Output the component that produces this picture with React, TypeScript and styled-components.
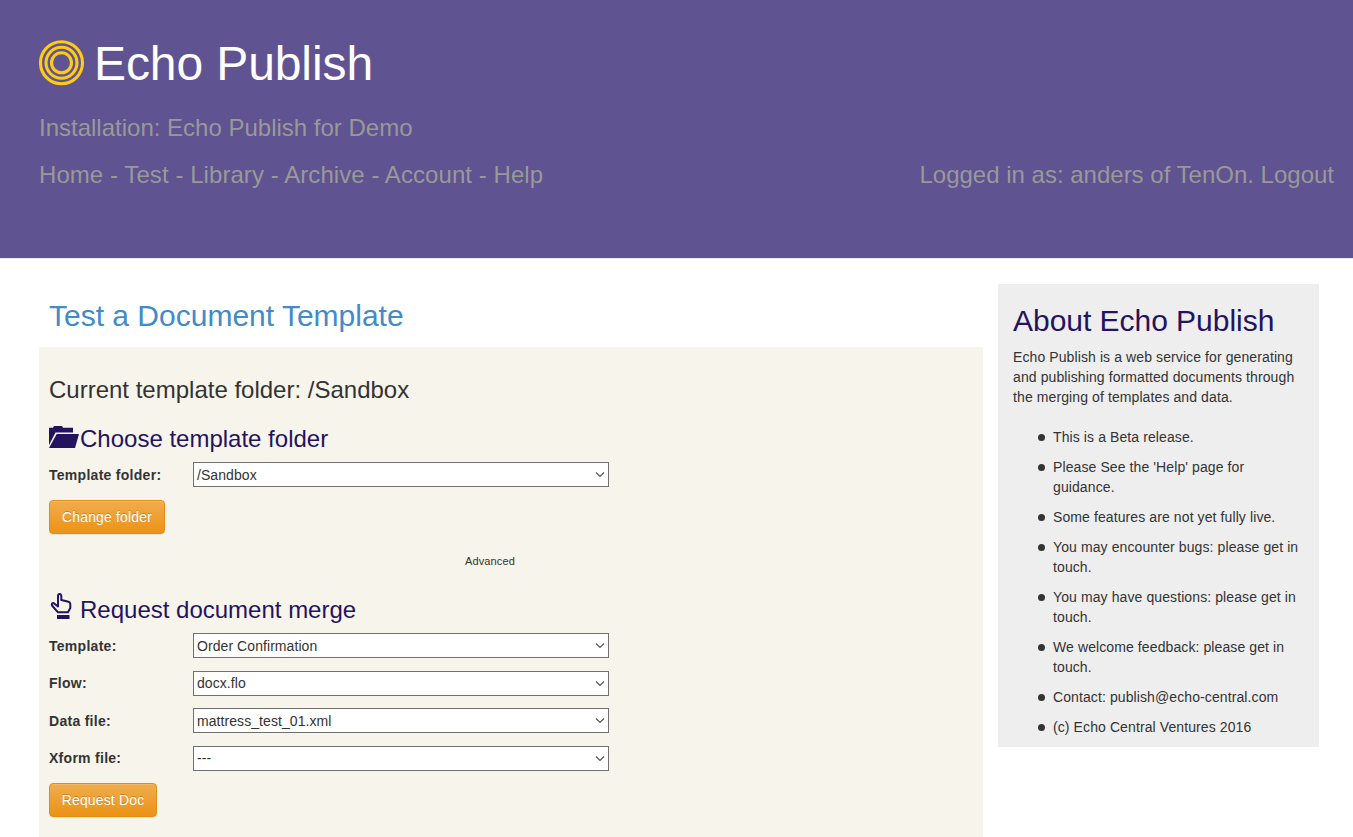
import React from 'react';
import styled, { createGlobalStyle } from 'styled-components';

const Global = createGlobalStyle`
  * { box-sizing: border-box; }
  body {
    margin: 0; background: #fff; color: #333; overflow: hidden;
    font: 14px/20px "Liberation Sans", Arial, sans-serif;
  }
  h1, h2, h3, h4, p, ul { margin: 0; font-weight: 400; }
`;

const Page = styled.div`height: 837px; overflow: hidden;`;
const Header = styled.header`
  height: 259px; padding: 36px 19px 0 39px; background: #5f5391;
  border-bottom: 1px solid #eeeeee; color: #999;
`;
const Brand = styled.h1`
  display: flex; align-items: center; gap: 9px; height: 53px;
  font-size: 48px; line-height: 53px; letter-spacing: -0.1px; color: #fff; white-space: nowrap;
`;
const BrandName = styled.span`padding-top: 2px;`;
const Installation = styled.p`margin-top: 26px; font-size: 24px; line-height: 26px;`;
const NavRow = styled.div`
  display: flex; justify-content: space-between; margin-top: 21px;
  font-size: 24px; line-height: 26px;
  nav { letter-spacing: 0.065px; }
`;
const Columns = styled.div`
  display: flex; align-items: flex-start; gap: 15px; padding: 25px 34px 0 39px;
`;
const Main = styled.main`width: 944px;`;
const Title = styled.h2`
  height: 63px; padding: 15px 0 0 10px; font-size: 30px; line-height: 33px; color: #428bca;
`;
const Panel = styled.section`
  height: 500px; padding: 29px 10px 0; background: #f7f4ec;
`;
const Current = styled.h3`font-size: 24px; line-height: 28px;`;
const Section = styled.h3<{ $top: number; $drop?: number }>`
  display: flex; height: 32px; margin-top: ${p => p.$top}px;
  font-size: 24px; line-height: 32px; color: #24135f;
  > span:last-child { padding-top: ${p => p.$drop ?? 0}px; }
`;
const IconBox = styled.span`flex: none; width: 31px; height: 32px; svg { display: block; }`;
const Field = styled.label<{ $gap: number }>`
  display: flex; align-items: center; height: 25px; margin-top: ${p => p.$gap}px;
`;
const Label = styled.span`width: 144px; font-weight: 700; letter-spacing: 0.28px;`;
const Select = styled.span`
  display: flex; align-items: center; justify-content: space-between;
  width: 416px; height: 25px; padding: 0 3px;
  border: 1px solid #707070; background: #fff; letter-spacing: 0.07px;
`;
const Button = styled.button<{ $width: number }>`
  display: block; width: ${p => p.$width}px; height: 34px; margin-top: 12.5px; padding: 0;
  border: 1px solid #e38d13; border-radius: 4px;
  background: linear-gradient(#f0ad4e, #eb9316); color: #fff;
  font: 14px/20px "Liberation Sans", Arial, sans-serif; letter-spacing: 0.15px;
  text-shadow: 0 -1px 0 rgba(0,0,0,.2);
  box-shadow: inset 0 1px 0 rgba(255,255,255,.15), 0 1px 1px rgba(0,0,0,.075);
`;
const Advanced = styled.div`
  width: 882px; margin-top: 17.5px; text-align: center; font-size: 11px; line-height: 20px;
  letter-spacing: 0.12px;
`;
const Aside = styled.aside`
  width: 321px; height: 463px; padding: 20px 15px 0; background: #eee; letter-spacing: 0.1px;
`;
const AsideTitle = styled.h2`
  font-size: 30px; line-height: 33px; letter-spacing: -0.03px; color: #24135f; white-space: nowrap;
`;
const AsideText = styled.p`margin-top: 10px; white-space: nowrap;`;
const Notes = styled.ul`
  margin-top: 20px; padding-left: 40px; list-style: none;
`;
const Note = styled.li`
  margin-bottom: 10px; white-space: pre;
  &::before {
    content: ''; float: left; width: 7px; height: 7px; margin: 6.5px 0 0 -15px;
    border-radius: 50%; background: #333;
  }
`;

const Logo = () => (
  <svg width="46" height="46" viewBox="0 0 46 46" fill="none" stroke="#ffcb14" strokeWidth="3.100">
    <circle cx="22.5" cy="22.800" r="21" />
    <circle cx="22.5" cy="22.800" r="15.500" />
    <circle cx="22.5" cy="22.800" r="10" />
  </svg>
);
const Folder = () => (
  <svg width="31" height="32" fill="#24135f">
    <path d="M0 4.700H4L5 3H13L14 4.700H24V9.500H6.500L0 22z" />
    <path d="M7.700 11H30L26 25H0z" />
  </svg>
);
const Hand = () => (
  <svg width="31" height="32" fill="none" stroke="#24135f" strokeWidth="2" strokeLinejoin="round">
    <path d="M9 19.300L3 12.500Q2.200 10.200 4.500 10L9 13.500V3Q9 1 10.600 1T12.300 3V7L19.500 8.700Q21.300 9.300 21.300 11V15L19 19.300Z" />
    <path d="M8 22h12.500v4H8z" fill="#24135f" stroke="none" />
  </svg>
);
const Chevron = () => (
  <svg width="10" height="7" fill="none" stroke="#555" strokeWidth="1.200"><path d="M1 1.500l4 4 4-4" /></svg>
);

const FormField = ({ label, value, gap = 12.5 }: { label: string; value: string; gap?: number }) => (
  <Field $gap={gap}><Label>{label}</Label><Select>{value}<Chevron /></Select></Field>
);

const notes = [
  'This is a Beta release.',
  "Please See the 'Help' page for\nguidance.",
  'Some features are not yet fully live.',
  'You may encounter bugs: please get in\ntouch.',
  'You may have questions: please get in\ntouch.',
  'We welcome feedback: please get in\ntouch.',
  'Contact: publish@echo-central.com',
  '(c) Echo Central Ventures 2016',
];

export default function App() {
  return (
    <Page>
      <Global />
      <Header>
        <Brand><Logo /><BrandName>Echo Publish</BrandName></Brand>
        <Installation>Installation: Echo Publish for Demo</Installation>
        <NavRow>
          <nav>Home - Test - Library - Archive - Account - Help</nav>
          <span>Logged in as: anders of TenOn. Logout</span>
        </NavRow>
      </Header>
      <Columns>
        <Main>
          <Title>Test a Document Template</Title>
          <Panel>
            <Current>Current template folder: /Sandbox</Current>
            <Section $top={19}><IconBox><Folder /></IconBox><span>Choose template folder</span></Section>
            <FormField label="Template folder:" value="/Sandbox" gap={7} />
            <Button $width={116}>Change folder</Button>
            <Advanced>Advanced</Advanced>
            <Section $top={22} $drop={1}><IconBox><Hand /></IconBox><span>Request document merge</span></Section>
            <FormField label="Template:" value="Order Confirmation" gap={8} />
            <FormField label="Flow:" value="docx.flo" />
            <FormField label="Data file:" value="mattress_test_01.xml" />
            <FormField label="Xform file:" value="---" />
            <Button $width={108}>Request Doc</Button>
          </Panel>
        </Main>
        <Aside>
          <AsideTitle>About Echo Publish</AsideTitle>
          <AsideText>Echo Publish is a web service for generating<br />and publishing formatted documents through<br />the merging of templates and data.</AsideText>
          <Notes>{notes.map(n => <Note key={n}>{n}</Note>)}</Notes>
        </Aside>
      </Columns>
    </Page>
  );
}
